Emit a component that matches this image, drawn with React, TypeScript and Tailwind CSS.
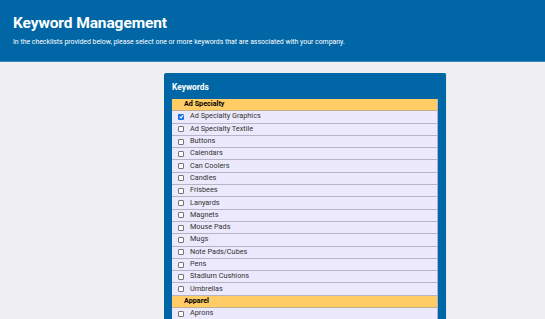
const groups: { name: string; items: string[] }[] = [
  {
    name: "Ad Specialty",
    items: [
      "Ad Specialty Graphics",
      "Ad Specialty Textile",
      "Buttons",
      "Calendars",
      "Can Coolers",
      "Candles",
      "Frisbees",
      "Lanyards",
      "Magnets",
      "Mouse Pads",
      "Mugs",
      "Note Pads/Cubes",
      "Pens",
      "Stadium Cushions",
      "Umbrellas",
    ],
  },
  { name: "Apparel", items: ["Aprons"] },
]

const checked = ["Ad Specialty Graphics"]

const Box = ({ on }: { on: boolean }) =>
  on ? (
    <span className="flex h-[6px] w-[6px] items-center justify-center rounded-[1px] bg-[#1a73e8]">
      <svg width="5" height="5" viewBox="0 0 6 6">
        <path d="M1 3.2 2.4 4.6 5 1.4" stroke="white" strokeWidth="1.3" fill="none" />
      </svg>
    </span>
  ) : (
    <span className="h-[6px] w-[6px] rounded-[1px] border border-[#767676] bg-white" />
  )

export default function App() {
  return (
    <div className="h-[319px] overflow-hidden bg-[#f0f0f2] font-['Roboto',sans-serif]">
      <header className="h-[62px] border-b border-[#3b8ac2] bg-[#0066a6] px-[13px] pt-[13px] text-white">
        <h1 className="text-[15.5px] font-bold leading-[20px] tracking-[-0.1px]">Keyword Management</h1>
        <p className="mt-[5px] text-[6.9px] leading-[9px]">
          In the checklists provided below, please select one or more keywords that are associated with your company.
        </p>
      </header>
      <div className="flex justify-center pt-[11px] pl-[66px]">
        <section className="w-[283px] rounded-t-[2px] border-r border-[#e2e6ea] bg-[#0066a6] px-[8px] pb-[8px]">
          <h2 className="pt-[9px] pb-[6px] text-[8.4px] font-bold leading-[11px] text-white">Keywords</h2>
          <div className="border-r border-[#b4b4c4]">
            {groups.map(g => (
              <div key={g.name}>
                <div className="flex h-[12.3px] items-center border-b border-[#c0b090] bg-[#ffcc66] pl-[12px] text-[7.2px] font-bold text-black">
                  {g.name}
                </div>
                {g.items.map(item => (
                  <div
                    key={item}
                    className="flex h-[12.3px] items-center border-b border-[#b4b4c4] bg-[#ebe9fb] text-[7.3px] text-[#333]"
                  >
                    <span className="flex w-[18px] justify-center">
                      <Box on={checked.includes(item)} />
                    </span>
                    <span>{item}</span>
                  </div>
                ))}
              </div>
            ))}
          </div>
        </section>
      </div>
    </div>
  )
}
